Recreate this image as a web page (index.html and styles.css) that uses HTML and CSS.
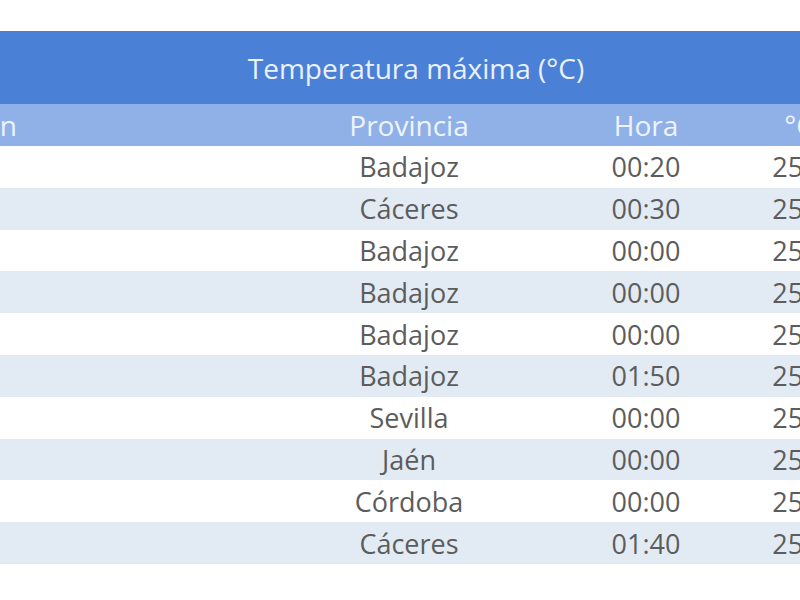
FILE: index.html
```html
<!DOCTYPE html>
<html lang="es">
<head>
<meta charset="utf-8">
<title>Temperatura máxima</title>
<link rel="stylesheet" href="styles.css">
</head>
<body>
<div class="frame">
  <table class="temps">
    <colgroup>
      <col class="c-est">
      <col class="c-prov">
      <col class="c-hora">
      <col class="c-temp">
    </colgroup>
    <thead>
      <tr class="title-row"><th colspan="4" class="title">Temperatura máxima (°C)</th></tr>
      <tr class="head-row">
        <th class="est">Estación</th>
        <th>Provincia</th>
        <th>Hora</th>
        <th>°C</th>
      </tr>
    </thead>
    <tbody>
      <tr><td class="est"></td><td>Badajoz</td><td>00:20</td><td>25,9</td></tr>
      <tr><td class="est"></td><td>Cáceres</td><td>00:30</td><td>25,8</td></tr>
      <tr><td class="est"></td><td>Badajoz</td><td>00:00</td><td>25,7</td></tr>
      <tr><td class="est"></td><td>Badajoz</td><td>00:00</td><td>25,6</td></tr>
      <tr><td class="est"></td><td>Badajoz</td><td>00:00</td><td>25,5</td></tr>
      <tr><td class="est"></td><td>Badajoz</td><td>01:50</td><td>25,4</td></tr>
      <tr><td class="est"></td><td>Sevilla</td><td>00:00</td><td>25,3</td></tr>
      <tr><td class="est"></td><td>Jaén</td><td>00:00</td><td>25,2</td></tr>
      <tr><td class="est"></td><td>Córdoba</td><td>00:00</td><td>25,1</td></tr>
      <tr><td class="est"></td><td>Cáceres</td><td>01:40</td><td>25,0</td></tr>
    </tbody>
  </table>
</div>
</body>
</html>
```

FILE: styles.css
```css
html, body {
  margin: 0;
  padding: 0;
  background: #ffffff;
}

body {
  font-family: "Open Sans", "Liberation Sans", sans-serif;
}

.frame {
  width: 800px;
  height: 600px;
  overflow: hidden;
  padding-top: 31px;
  box-sizing: border-box;
}

.temps {
  border-collapse: collapse;
  table-layout: fixed;
  width: 967px;
  margin-left: -92px;
  font-size: 27px;
}

.c-est { width: 341px; }
.c-prov { width: 320px; }
.c-hora { width: 154px; }
.c-temp { width: 152px; }

.temps th,
.temps td {
  padding: 0;
  text-align: center;
  white-space: nowrap;
  overflow: hidden;
}

.title-row {
  background: #4b80d7;
  height: 73px;
}

.title {
  font-weight: 400;
  font-size: 28px;
  color: #eaf1ff;
  padding-left: 49px !important;
}

.head-row {
  background: #8fb1e7;
  height: 42px;
}

.head-row th {
  font-weight: 400;
  font-size: 28px;
  color: #eef4ff;
}

.temps th.est,
.temps td.est {
  text-align: left;
}

.temps tbody tr {
  height: 41.8px;
  color: #5c5c5c;
}

.temps tbody tr:nth-child(even) {
  background: #e2ebf3;
}
```
